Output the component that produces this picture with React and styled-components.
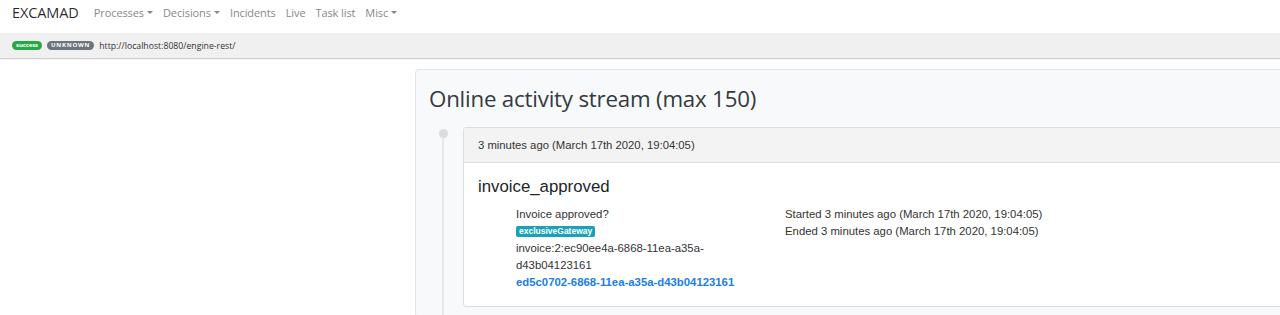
import React from 'react'
import styled, { createGlobalStyle } from 'styled-components'

const GlobalStyle = createGlobalStyle`
  body {
    margin: 0;
    background: #ffffff;
    overflow: hidden;
    font-family: 'Liberation Sans', Arial, sans-serif;
    color: #212529;
  }
`

const uiFont = `'Open Sans', 'Noto Sans', sans-serif`

const Page = styled.div`
  width: 1280px;
  display: flex;
  flex-direction: column;
`

const NavBar = styled.nav`
  height: 33px;
  box-sizing: border-box;
  display: flex;
  flex-direction: row;
  align-items: flex-start;
  padding: 4px 12px 0 12px;
  font-family: ${uiFont};
  line-height: 18px;
`

const Brand = styled.div`
  font-size: 14.5px;
  color: rgba(0, 0, 0, 0.85);
  margin-right: 10px;
  letter-spacing: -0.1px;
`

const NavItem = styled.div`
  font-size: 11px;
  color: #888888;
  padding: 0 5px;
  display: flex;
  align-items: center;
  letter-spacing: -0.1px;

  &::after {
    content: ${props => props.dropdown ? "''" : 'none'};
    display: inline-block;
    margin-left: 3px;
    border-top: 3.5px solid #888888;
    border-left: 3px solid transparent;
    border-right: 3px solid transparent;
    margin-top: -2px;
  }
`

const StatusBar = styled.div`
  height: 25px;
  background: #f0f0f0;
  border-bottom: 1px solid #cfcfcf;
  box-shadow: 0 1px 1px rgba(0, 0, 0, 0.04);
  display: flex;
  flex-direction: row;
  align-items: center;
  padding: 0 12px;
  gap: 5px;
`

const Pill = styled.span`
  display: inline-block;
  font-family: ${uiFont};
  font-size: 6px;
  font-weight: 700;
  line-height: 9px;
  height: 9px;
  padding: 0 4px;
  border-radius: 5px;
  letter-spacing: ${props => props.wide ? '0.8px' : '-0.1px'};
  color: #ffffff;
  background: ${props => props.color};
`

const Url = styled.span`
  font-family: ${uiFont};
  font-size: 8.7px;
  color: #333333;
`

const Main = styled.div`
  display: flex;
  flex-direction: row;
  padding-top: 10px;
`

const Side = styled.div`
  width: 415px;
  flex-shrink: 0;
`

const Stream = styled.section`
  flex-shrink: 0;
  width: 1000px;
  background: #f8f9fa;
  border: 1px solid #e4e4e4;
  border-radius: 4px;
  padding: 12px 0 0 13px;
`

const Heading = styled.h2`
  margin: 0 0 11px 0;
  font-family: ${uiFont};
  font-weight: 500;
  font-size: 22.3px;
  line-height: 34px;
  color: #343a40;
  letter-spacing: -0.2px;
`

const Entry = styled.div`
  display: flex;
  flex-direction: row;
`

const Rail = styled.div`
  width: 28px;
  flex-shrink: 0;
  display: flex;
  flex-direction: column;
  align-items: center;
  padding-top: 2px;
  margin-right: 6px;

  &::before {
    content: '';
    width: 9px;
    height: 9px;
    border-radius: 50%;
    background: #dcdcdc;
  }

  &::after {
    content: '';
    flex: 1;
    width: 2px;
    background: #e8e8e8;
  }
`

const Card = styled.div`
  flex: 1;
  background: #ffffff;
  border: 1px solid #dedede;
  border-radius: 3px;
  margin-bottom: 10px;
`

const CardHeader = styled.div`
  height: 34px;
  display: flex;
  align-items: center;
  padding: 0 14px;
  background: #f3f3f3;
  border-bottom: 1px solid #dedede;
  font-size: 11.3px;
  color: #333333;
`

const CardBody = styled.div`
  padding: 12px 14px 15px 14px;
`

const Title = styled.div`
  font-size: 16.8px;
  line-height: 24px;
  color: #212529;
  margin-bottom: 7px;
`

const Details = styled.div`
  display: grid;
  grid-template-columns: 240px 1fr;
  column-gap: 29px;
  padding-left: 38px;
  font-size: 11.35px;
  line-height: 17px;
  color: #333333;
`

const Column = styled.div`
  display: flex;
  flex-direction: column;
  align-items: flex-start;
`

const TypeBadge = styled.span`
  display: inline-block;
  background: #17a2b8;
  color: #ffffff;
  font-weight: 700;
  font-size: 8.5px;
  line-height: 11px;
  padding: 0 3px;
  border-radius: 2px;
  margin: 3px 0 3px 0;
`

const Link = styled.a`
  color: #1a7ee6;
  font-weight: 700;
  text-decoration: none;
`

export default function App() {
  return (
    <Page>
      <GlobalStyle />
      <NavBar>
        <Brand>EXCAMAD</Brand>
        <NavItem dropdown>Processes</NavItem>
        <NavItem dropdown>Decisions</NavItem>
        <NavItem>Incidents</NavItem>
        <NavItem>Live</NavItem>
        <NavItem>Task list</NavItem>
        <NavItem dropdown>Misc</NavItem>
      </NavBar>
      <StatusBar>
        <Pill color="#28a745">success</Pill>
        <Pill color="#6c757d" wide>UNKNOWN</Pill>
        <Url>http://localhost:8080/engine-rest/</Url>
      </StatusBar>
      <Main>
        <Side />
        <Stream>
          <Heading>Online activity stream (max 150)</Heading>
          <Entry>
            <Rail />
            <Card>
              <CardHeader>3 minutes ago (March 17th 2020, 19:04:05)</CardHeader>
              <CardBody>
                <Title>invoice_approved</Title>
                <Details>
                  <Column>
                    <span>Invoice approved?</span>
                    <TypeBadge>exclusiveGateway</TypeBadge>
                    <span>invoice:2:ec90ee4a-6868-11ea-a35a-d43b04123161</span>
                    <Link href="#">ed5c0702-6868-11ea-a35a-d43b04123161</Link>
                  </Column>
                  <Column>
                    <span>Started 3 minutes ago (March 17th 2020, 19:04:05)</span>
                    <span>Ended 3 minutes ago (March 17th 2020, 19:04:05)</span>
                  </Column>
                </Details>
              </CardBody>
            </Card>
          </Entry>
        </Stream>
      </Main>
    </Page>
  )
}
